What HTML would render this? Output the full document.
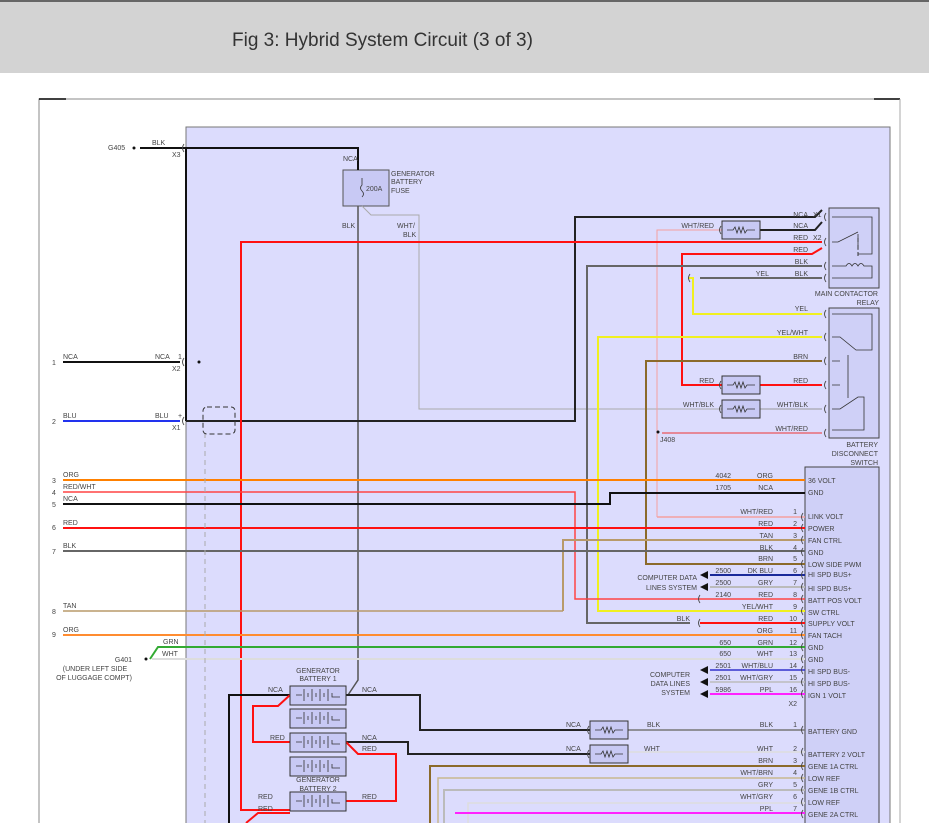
<!DOCTYPE html>
<html><head><meta charset="utf-8"><style>
html,body{margin:0;padding:0;background:#fff;width:929px;height:823px;overflow:hidden}
svg{position:absolute;left:0;top:0}
text{font-family:"Liberation Sans",sans-serif;font-size:7px;fill:#444}
.r{text-anchor:end}.m{text-anchor:middle}
</style></head><body>
<svg width="929" height="823" viewBox="0 0 929 823">
<rect x="0" y="0" width="929" height="73" fill="#d3d3d3"/>
<rect x="0" y="0" width="929" height="2" fill="#666"/>
<text x="232" y="46" style="font-size:19px;fill:#333">Fig 3: Hybrid System Circuit (3 of 3)</text>
<!-- frame -->
<path d="M39 823V99H900" fill="none" stroke="#888" stroke-width="1"/>
<path d="M39 99H66M874 99H900" stroke="#000" stroke-width="1.5"/>
<path d="M900 99V823" stroke="#aaa"/>
<rect x="186" y="127" width="704" height="700" fill="#dcdcfd" stroke="#777"/>
<!-- boxes -->
<rect x="829" y="208" width="50" height="80" fill="#cfd0f7" stroke="#444"/>
<rect x="829" y="308" width="50" height="130" fill="#cfd0f7" stroke="#444"/>
<rect x="805" y="467" width="74" height="360" fill="#cfd0f7" stroke="#444"/>
<rect x="343" y="170" width="46" height="36" fill="#c8c9f4" stroke="#555"/>
<g fill="none" stroke-width="2">
<!-- top black -->
<path d="M140 148H186M186 148H358V170" stroke="#111"/>
<path d="M186 148V421" stroke="#111"/>
<path d="M358 206V680L348 695" stroke="#555" stroke-width="1.5"/>
<path d="M362 206L371 215H419V409H722" stroke="#aaa" stroke-width="1"/>
<path d="M760 409H822" stroke="#999" stroke-width="1"/>
<path d="M63 362H180" stroke="#111"/>
<path d="M63 421H180" stroke="#2233ee"/>
<path d="M186 421H575V217H815L822 210" stroke="#222"/>
<path d="M657 517V230H722" stroke="#f4a0a0" stroke-width="1"/>
<path d="M760 230H815L822 222" stroke="#222"/>
<path d="M241 808V242H822" stroke="#f11"/>
<path d="M822 248L812 254H682V385H722M760 385H822" stroke="#f11"/>
<path d="M822 266H587V623H690" stroke="#666"/>
<path d="M822 278H700" stroke="#666"/>
<path d="M688 278H693V314H822" stroke="#f0f020"/>
<path d="M822 337H598V611H805" stroke="#f0f020"/>
<path d="M822 361H646V564H805" stroke="#8b6a2a"/>
<path d="M662 433H822" stroke="#e33" stroke-width="1"/>
<!-- left wires -->
<path d="M63 480H805" stroke="#ff8000"/>
<path d="M63 492H575V599H805" stroke="#f44" stroke-width="1.5"/>
<path d="M63 504H610V493H805" stroke="#111"/>
<path d="M657 517H805" stroke="#f4a0a0" stroke-width="1.5"/>
<path d="M63 528H805" stroke="#f11"/>
<path d="M563 611V540H805" stroke="#b89a6a"/>
<path d="M63 611H563" stroke="#b89a6a" stroke-width="1.5"/>
<path d="M63 551H805" stroke="#666"/>
<path d="M710 575H805" stroke="#1a2a9a"/>
<path d="M710 587H805" stroke="#bbb"/>
<path d="M700 623H805" stroke="#f11"/>
<path d="M63 635H805" stroke="#ff8c30"/>
<path d="M150 659L158 647H805" stroke="#3a3"/>
<path d="M152 659H805" stroke="#ddd"/>
<path d="M710 670H805" stroke="#33c" stroke-width="1.5"/>
<path d="M710 682H805" stroke="#bbb" stroke-width="1.5"/>
<path d="M710 694H805" stroke="#f2f"/>
<!-- battery area -->
<path d="M290 695H229V823" stroke="#111"/>
<path d="M290 695L278 706H253V742H290" stroke="#f11"/>
<path d="M346 695H420V730H590" stroke="#222"/>
<path d="M346 742H408V754H590" stroke="#222"/>
<path d="M346 742L358 754H396V801H346" stroke="#f11"/>
<path d="M241 808V810H290" stroke="#f11"/>
<path d="M628 730H805" stroke="#777" stroke-width="1.5"/>
<path d="M628 752H805" stroke="#ddd" stroke-width="1.5"/>
<path d="M430 823V766H805" stroke="#8b6a2a"/>
<path d="M438 823V778H805" stroke="#c8b890" stroke-width="1.5"/>
<path d="M444 823V790H805" stroke="#bbb"/>
<path d="M468 823V803H805" stroke="#ddd" stroke-width="1.5"/>
<path d="M455 813H805" stroke="#f2f"/>
<path d="M246 823L258 813H290" stroke="#f11"/>
</g>
<path d="M205 433V823" stroke="#aaa" stroke-dasharray="5,4"/>
<rect x="203" y="407" width="32" height="27" rx="4" fill="none" stroke="#333" stroke-dasharray="5,3"/>
<!-- resistor boxes -->
<g fill="#c8c9f4" stroke="#333">
<rect x="722" y="221" width="38" height="18"/><rect x="722" y="376" width="38" height="18"/><rect x="722" y="400" width="38" height="18"/>
<rect x="590" y="721" width="38" height="18"/><rect x="590" y="745" width="38" height="18"/>
<rect x="290" y="686" width="56" height="19"/><rect x="290" y="709" width="56" height="19"/><rect x="290" y="733" width="56" height="19"/><rect x="290" y="757" width="56" height="19"/><rect x="290" y="792" width="56" height="19"/>
</g>
<g fill="none" stroke="#333" stroke-width="0.8">
<path d="M727 230h6l2-3 2 6 2-6 2 6 2-6 2 6 2-3h8"/><path d="M727 385h6l2-3 2 6 2-6 2 6 2-6 2 6 2-3h8"/><path d="M727 409h6l2-3 2 6 2-6 2 6 2-6 2 6 2-3h8"/>
<path d="M595 730h6l2-3 2 6 2-6 2 6 2-6 2 6 2-3h8"/><path d="M595 754h6l2-3 2 6 2-6 2 6 2-6 2 6 2-3h8"/>
<path d="M296 695h6m2-6v12m4-8v4m4-8v12m4-8v4m4-8v12m4-8v4m4-8v12m4-8v4h8"/>
<path d="M296 718h6m2-6v12m4-8v4m4-8v12m4-8v4m4-8v12m4-8v4m4-8v12m4-8v4h8"/>
<path d="M296 742h6m2-6v12m4-8v4m4-8v12m4-8v4m4-8v12m4-8v4m4-8v12m4-8v4h8"/>
<path d="M296 766h6m2-6v12m4-8v4m4-8v12m4-8v4m4-8v12m4-8v4m4-8v12m4-8v4h8"/>
<path d="M296 801h6m2-6v12m4-8v4m4-8v12m4-8v4m4-8v12m4-8v4m4-8v12m4-8v4h8"/>
<!-- relay internals -->
<path d="M832 217H872V254H858M832 242H838L858 232M858 234V250M832 266H846q3-5 6 0q3-5 6 0q3-5 6 0H872V278H832" stroke-dasharray="0"/>
<path d="M832 314H872V350H856L840 337H832M832 361H840M832 385H840M832 409H840L858 397H864V430H832M848 355V398" />
<path d="M362 178V185q-3 3 0 6q3 3 0 6"/>
</g>
<path d="M858 238V258" stroke="#333" stroke-dasharray="4,3"/>
<!-- connector marks -->
<g fill="none" stroke="#444" stroke-width="0.9">
<path d="M184 144q-3 4 0 8M184 358q-3 4 0 8M184 417q-3 4 0 8"/>
<path d="M826 213q-3 4 0 8M826 238q-3 4 0 8M826 262q-3 4 0 8M826 274q-3 4 0 8M826 310q-3 4 0 8M826 333q-3 4 0 8M826 357q-3 4 0 8M826 381q-3 4 0 8M826 405q-3 4 0 8M826 429q-3 4 0 8"/>
<path d="M803 513q-3 4 0 8M803 524q-3 4 0 8M803 536q-3 4 0 8M803 548q-3 4 0 8M803 560q-3 4 0 8M803 571q-3 4 0 8M803 583q-3 4 0 8M803 595q-3 4 0 8M803 607q-3 4 0 8M803 619q-3 4 0 8M803 631q-3 4 0 8M803 643q-3 4 0 8M803 655q-3 4 0 8M803 666q-3 4 0 8M803 678q-3 4 0 8M803 690q-3 4 0 8M803 726q-3 4 0 8M803 748q-3 4 0 8M803 762q-3 4 0 8M803 774q-3 4 0 8M803 786q-3 4 0 8M803 798q-3 4 0 8M803 810q-3 4 0 8"/>
<path d="M721 226q-3 4 0 8M721 381q-3 4 0 8M721 405q-3 4 0 8M589 726q-3 4 0 8M589 750q-3 4 0 8M700 595q-3 4 0 8M700 619q-3 4 0 8M690 274q-3 4 0 8"/>
</g>
<g fill="#111"><path d="M700 575l8-4v8z"/><path d="M700 587l8-4v8z"/><path d="M700 670l8-4v8z"/><path d="M700 682l8-4v8z"/><path d="M700 694l8-4v8z"/>
<circle cx="658" cy="432" r="1.5"/><circle cx="134" cy="148" r="1.5"/><circle cx="146" cy="659" r="1.5"/><circle cx="199" cy="362" r="1.5"/></g>
<!-- text -->
<text x="108" y="150">G405</text><text x="152" y="145">BLK</text><text x="172" y="157">X3</text>
<text x="343" y="161">NCA</text><text x="391" y="176">GENERATOR</text><text x="391" y="184">BATTERY</text><text x="391" y="193">FUSE</text><text x="366" y="191">200A</text>
<text x="342" y="228">BLK</text><text x="397" y="228">WHT/</text><text x="403" y="237">BLK</text>
<text x="52" y="365">1</text><text x="63" y="359">NCA</text><text x="155" y="359">NCA</text><text x="178" y="359">1</text><text x="172" y="371">X2</text>
<text x="52" y="424">2</text><text x="63" y="418">BLU</text><text x="155" y="418">BLU</text><text x="178" y="418">+</text><text x="172" y="430">X1</text>
<text x="52" y="483">3</text><text x="63" y="477">ORG</text><text x="52" y="495">4</text><text x="63" y="489">RED/WHT</text><text x="52" y="507">5</text><text x="63" y="501">NCA</text>
<text x="52" y="530">6</text><text x="63" y="525">RED</text><text x="52" y="554">7</text><text x="63" y="548">BLK</text><text x="52" y="614">8</text><text x="63" y="608">TAN</text><text x="52" y="637">9</text><text x="63" y="632">ORG</text>
<text x="163" y="644">GRN</text><text x="162" y="656">WHT</text><text x="132" y="662" class="r">G401</text><text x="95" y="671" class="m">(UNDER LEFT SIDE</text><text x="94" y="680" class="m">OF LUGGAGE COMPT)</text>
<text x="318" y="673" class="m">GENERATOR</text><text x="318" y="681" class="m">BATTERY 1</text><text x="318" y="782" class="m">GENERATOR</text><text x="318" y="791" class="m">BATTERY 2</text>
<text x="268" y="692">NCA</text><text x="362" y="692">NCA</text><text x="270" y="740">RED</text><text x="362" y="740">NCA</text><text x="362" y="751">RED</text>
<text x="258" y="799">RED</text><text x="362" y="799">RED</text><text x="258" y="811">RED</text>
<text x="566" y="727">NCA</text><text x="566" y="751">NCA</text><text x="647" y="727">BLK</text><text x="644" y="751">WHT</text>
<text x="808" y="217" class="r">NCA</text><text x="813" y="217">X1</text><text x="808" y="228" class="r">NCA</text><text x="808" y="240" class="r">RED</text><text x="813" y="240">X2</text>
<text x="808" y="252" class="r">RED</text><text x="808" y="264" class="r">BLK</text><text x="808" y="276" class="r">BLK</text><text x="769" y="276" class="r">YEL</text><text x="714" y="228" class="r">WHT/RED</text>
<text x="878" y="296" class="r">MAIN CONTACTOR</text><text x="879" y="305" class="r">RELAY</text>
<text x="808" y="311" class="r">YEL</text><text x="808" y="335" class="r">YEL/WHT</text><text x="808" y="359" class="r">BRN</text><text x="808" y="383" class="r">RED</text><text x="714" y="383" class="r">RED</text>
<text x="808" y="407" class="r">WHT/BLK</text><text x="714" y="407" class="r">WHT/BLK</text><text x="808" y="431" class="r">WHT/RED</text><text x="660" y="442">J408</text>
<text x="878" y="447" class="r">BATTERY</text><text x="878" y="456" class="r">DISCONNECT</text><text x="878" y="465" class="r">SWITCH</text>
<text x="731" y="478" class="r">4042</text><text x="773" y="478" class="r">ORG</text><text x="731" y="490" class="r">1705</text><text x="773" y="490" class="r">NCA</text>
<text x="808" y="483">36 VOLT</text><text x="808" y="495">GND</text>
<g class="r">
<text x="773" y="514" class="r">WHT/RED</text><text x="773" y="526" class="r">RED</text><text x="773" y="538" class="r">TAN</text><text x="773" y="550" class="r">BLK</text><text x="773" y="561" class="r">BRN</text><text x="773" y="573" class="r">DK BLU</text><text x="773" y="585" class="r">GRY</text><text x="773" y="597" class="r">RED</text><text x="773" y="609" class="r">YEL/WHT</text><text x="773" y="621" class="r">RED</text><text x="773" y="633" class="r">ORG</text><text x="773" y="645" class="r">GRN</text><text x="773" y="656" class="r">WHT</text><text x="773" y="668" class="r">WHT/BLU</text><text x="773" y="680" class="r">WHT/GRY</text><text x="773" y="692" class="r">PPL</text>
<text x="797" y="514" class="r">1</text><text x="797" y="526" class="r">2</text><text x="797" y="538" class="r">3</text><text x="797" y="550" class="r">4</text><text x="797" y="561" class="r">5</text><text x="797" y="573" class="r">6</text><text x="797" y="585" class="r">7</text><text x="797" y="597" class="r">8</text><text x="797" y="609" class="r">9</text><text x="797" y="621" class="r">10</text><text x="797" y="633" class="r">11</text><text x="797" y="645" class="r">12</text><text x="797" y="656" class="r">13</text><text x="797" y="668" class="r">14</text><text x="797" y="680" class="r">15</text><text x="797" y="692" class="r">16</text><text x="797" y="706" class="r">X2</text>
<text x="731" y="573" class="r">2500</text><text x="731" y="585" class="r">2500</text><text x="731" y="597" class="r">2140</text><text x="731" y="645" class="r">650</text><text x="731" y="656" class="r">650</text><text x="731" y="668" class="r">2501</text><text x="731" y="680" class="r">2501</text><text x="731" y="692" class="r">5986</text>
<text x="697" y="580" class="r">COMPUTER DATA</text><text x="697" y="590" class="r">LINES SYSTEM</text><text x="690" y="621" class="r">BLK</text>
<text x="690" y="677" class="r">COMPUTER</text><text x="690" y="686" class="r">DATA LINES</text><text x="690" y="695" class="r">SYSTEM</text>
<text x="773" y="727" class="r">BLK</text><text x="773" y="751" class="r">WHT</text><text x="773" y="763" class="r">BRN</text><text x="773" y="775" class="r">WHT/BRN</text><text x="773" y="787" class="r">GRY</text><text x="773" y="799" class="r">WHT/GRY</text><text x="773" y="811" class="r">PPL</text>
<text x="797" y="727" class="r">1</text><text x="797" y="751" class="r">2</text><text x="797" y="763" class="r">3</text><text x="797" y="775" class="r">4</text><text x="797" y="787" class="r">5</text><text x="797" y="799" class="r">6</text><text x="797" y="811" class="r">7</text>
</g>
<text x="808" y="519">LINK VOLT</text><text x="808" y="531">POWER</text><text x="808" y="543">FAN CTRL</text><text x="808" y="555">GND</text><text x="808" y="567">LOW SIDE PWM</text><text x="808" y="577">HI SPD BUS+</text><text x="808" y="591">HI SPD BUS+</text><text x="808" y="603">BATT POS VOLT</text><text x="808" y="615">SW CTRL</text><text x="808" y="626">SUPPLY VOLT</text><text x="808" y="638">FAN TACH</text><text x="808" y="650">GND</text><text x="808" y="662">GND</text><text x="808" y="674">HI SPD BUS-</text><text x="808" y="686">HI SPD BUS-</text><text x="808" y="698">IGN 1 VOLT</text>
<text x="808" y="734">BATTERY GND</text><text x="808" y="757">BATTERY 2 VOLT</text><text x="808" y="769">GENE 1A CTRL</text><text x="808" y="781">LOW REF</text><text x="808" y="793">GENE 1B CTRL</text><text x="808" y="805">LOW REF</text><text x="808" y="817">GENE 2A CTRL</text>
</svg>
</body></html>
